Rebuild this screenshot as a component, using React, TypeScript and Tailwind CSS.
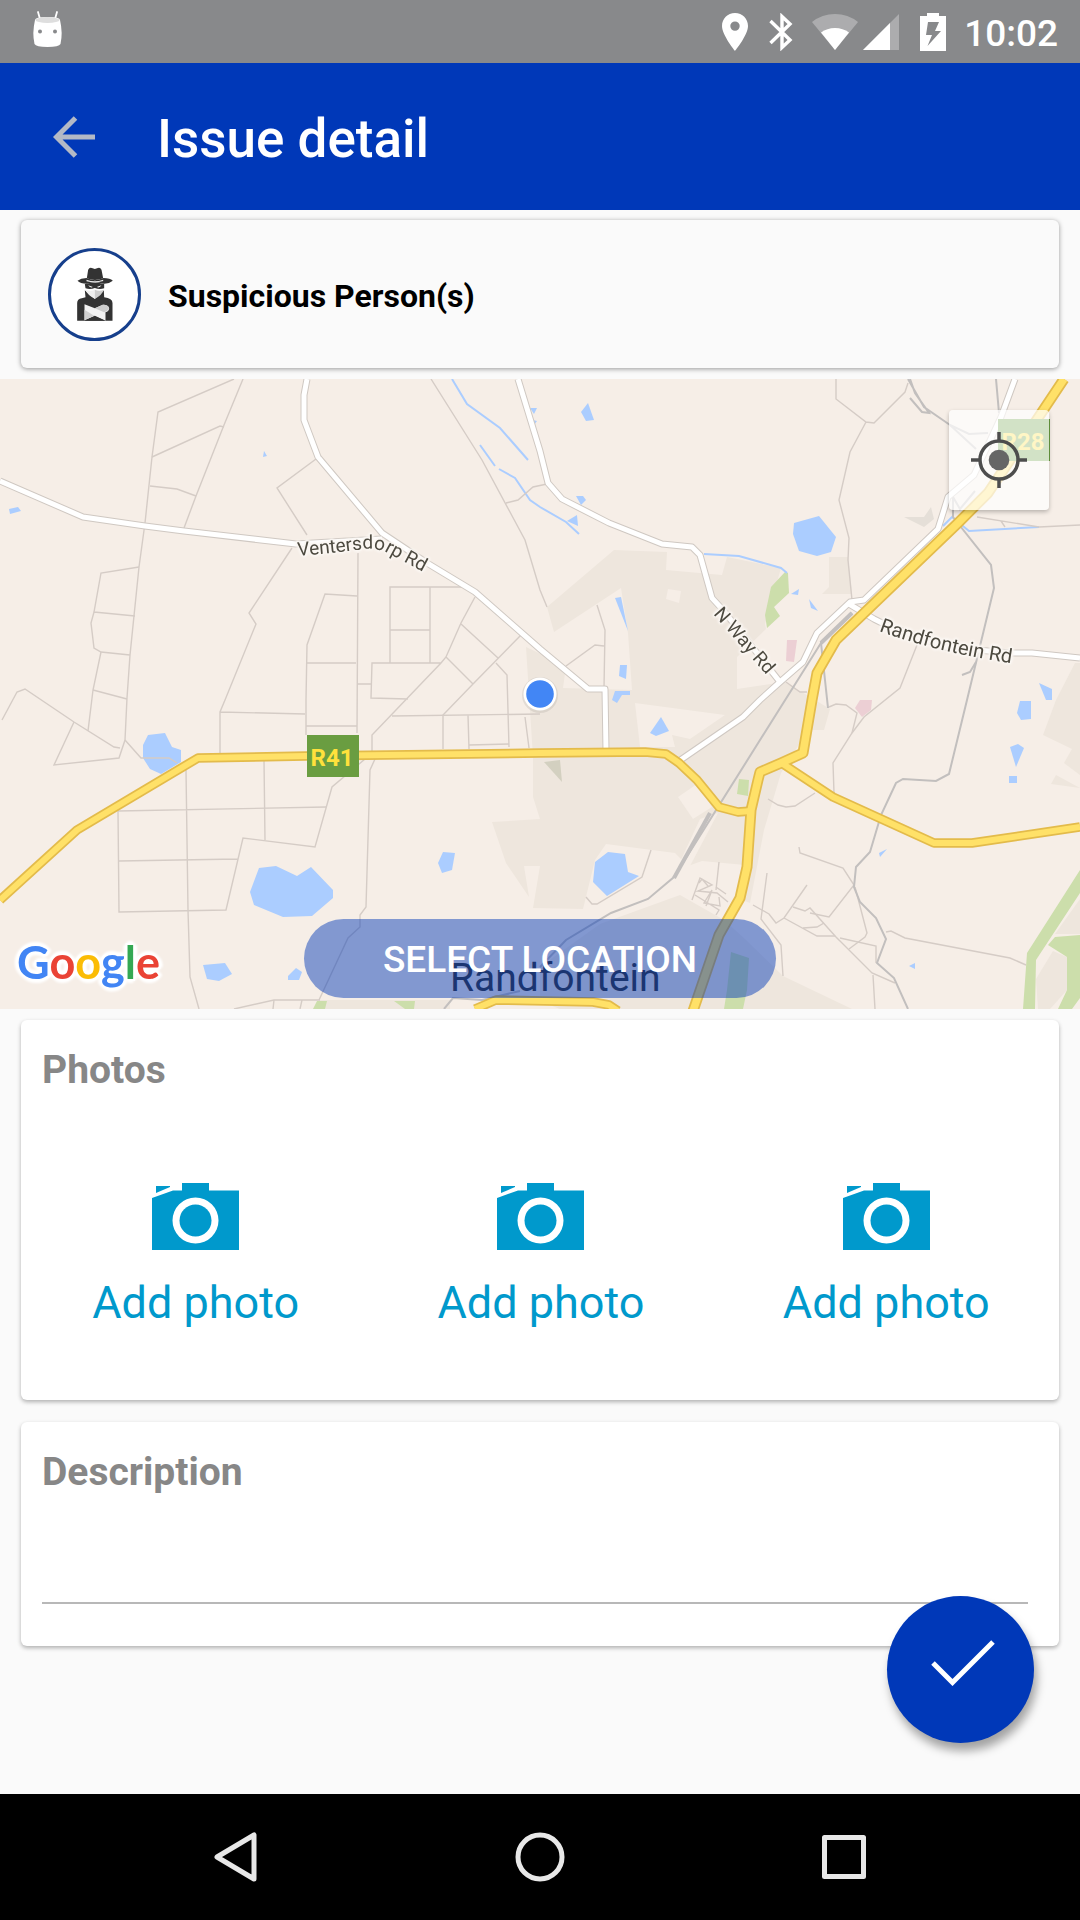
import React, { useState } from 'react';

const minorRoads = [
  'M234 0L158 33L152 78L145 144L139 188L130 276L127 319L125 361L119 379L54 386L74 343',
  'M243 0L224 46L196 117L184 149',
  'M152 78L220 47L224 48M150 107L177 110L196 117',
  'M139 188L101 194L94 233L91 244L94 269L101 273L130 276M94 233L135 237',
  'M101 273L93 311L88 352M93 311L127 320',
  'M2 341L17 313L25 310L74 343L114 368L120 369',
  'M316 80L277 109L307 156',
  'M292 169L249 234L256 245L225 321L220 333V374M220 333L305 335',
  'M358 174L357 354M357 217L325 215L307 266L306 321V356M307 284H356M306 347H357',
  'M463 208H390V284M430 208V284M390 251H430',
  'M475 218L461 244L446 278L441 284L372 284L371 319L408 320M441 284L372 356V373M357 305H372',
  'M461 245L498 279M446 278L473 305M521 256L473 305L443 336V370M496 284L507 296L509 368',
  'M392 337L540 335M468 336L469 370M469 366L509 365M525 338L529 369',
  'M431 0L482 81L525 161L540 211L547 228M506 124L518 121L533 108L547 105',
  'M186 391L188 531L190 598L199 630M118 432L326 428',
  'M118 432L119 533L226 531L243 459L315 468L332 408L365 380M264 381L265 461M119 482L238 480',
  'M375 380L370 391L366 528L360 536V548L348 559L319 621',
  'M234 630L274 621L320 621M274 621L273 630M302 621L300 630',
  'M125 361L141 379L169 379L177 384',
  'M836 0V20L866 43L874 44L905 13L908 4M866 43L850 73L839 121L849 159L848 181L852 221',
  'M977 138L1039 148L1080 146M1001 142L1005 148',
  'M917 266L900 309L864 338L852 354L833 384L834 414',
  'M566 287L595 266L604 267M597 226L605 251L604 309',
  'M786 303L800 313L807 313M829 328L836 325L846 326L857 334L852 354',
  'M768 420L778 426L786 428L795 427L815 414',
  'M799 468L800 474L843 489L854 506L829 538L810 534',
  'M807 506L784 539L776 544L769 535L753 526',
  'M793 528L805 532L810 529L836 558L872 594L895 604',
  'M784 539L817 557L835 557M803 549L817 548L824 544M840 559L876 567V584',
  'M855 508L867 554L865 558L849 570M767 494L761 540L781 566L783 597M873 596L875 630',
  'M886 553L891 552L905 559L1010 579L1026 586',
  'M651 471L642 498L597 525H592L586 518M719 483L716 511',
  'M692 521L700 499L712 506L698 512L717 514L728 523M695 516L719 531L716 536M716 508L726 515M706 527L712 511L704 524L720 527L719 518M699 504L702 500L708 507',
];

const railways = [
  'M908 0L924 28L950 46L969 55L988 54M910 19L922 33L929 34L915 14L910 0M950 46L976 70',
  'M996 0L999 34M975 112L960 130L953 118V138L991 186L994 209L967 321L949 395L936 402L903 400L896 404L881 436L870 473L856 488L854 508L860 523L876 539L886 560L877 584L894 599L908 630',
  'M962 296L970 293L976 283M852 234L821 264L828 329',
  'M821 264L674 498L648 520L611 534L566 561L540 588',
  'M444 630L453 619L482 621L520 612',
];

const whiteRoads = [
  'M0 102L83 138L145 147L184 152L296 165L382 160',
  'M307 0L304 16V41L318 78L382 154L427 184L475 213L540 270L588 310H605L606 372',
  'M518 0L540 72L548 104L562 120L609 144L662 165L692 168L700 176L712 219L723 231L780 303',
  'M1015 0L1001 38L974 96L948 118L938 150L864 221L850 223L817 254L803 283L780 303L760 321L743 338L679 382',
  'M849 225L874 240L884 245L945 268L1010 274H1032L1080 279',
];

const yellowRoads = [
  'M0 521L77 451L198 379L306 377L540 374L645 373L666 375L679 384L697 401L719 428L738 433L751 432',
  'M783 385L833 418L934 464H972L1080 448',
  'M475 630L496 621L593 623L609 626L618 632',
  'M1064 0L988 114L958 144L836 261L817 294L812 321L803 374L781 384L760 393L758 401L751 431L747 488L740 519L719 556L693 632',
];

const water = [
  '9,130 18,128 21,132 10,135',
  '264,72 267,77 263,78',
  '530,29 537,29 534,35',
  '533,41 537,42 534,46',
  '588,24 594,41 586,42 581,33',
  '576,117 583,117 586,121 581,126',
  '567,142 577,136 578,147',
  '794,144 819,137 836,158 831,173 817,177 799,172 793,155',
  '615,219 621,218 628,252',
  '620,286 627,286 626,300 619,297',
  '615,312 630,312 630,316 622,316 617,324 612,321',
  '791,215 799,210 798,216',
  '809,220 818,232 811,229',
  '1039,304 1052,310 1052,321 1046,321',
  '1020,322 1031,322 1031,340 1021,341 1017,334',
  '1010,368 1018,365 1024,369 1016,388',
  '1009,397 1017,397 1017,404 1009,404',
  '661,338 669,352 656,357 650,354',
  '595,483 608,473 625,475 628,493 639,497 607,517 593,503',
  '879,474 887,470 880,478',
  '909,587 915,584 915,590',
  '148,356 165,354 172,368 181,371 181,383 161,395 150,390 143,379 143,366',
  '259,489 276,487 297,497 311,488 333,511 333,519 312,537 283,538 254,526 250,513',
  '443,473 455,474 452,491 442,494 438,484',
  '203,586 225,584 232,595 219,602 207,600',
  '288,601 288,597 296,589 302,593 299,601',
];

const streams =
  'M452 0L467 25L500 49L528 81M480 66L495 87M499 90L515 99L530 121L540 128L566 143L579 155M704 175L739 177L781 189L787 194M943 147L952 138L969 152L1039 148';

const urban = [
  '547,228 614,171 667,173 666,191 722,196 727,178 781,189 765,245 766,250 737,278 737,310 785,303 830,330 824,351 808,351 781,394 764,451 750,524 739,520 745,486 702,482 688,487 675,474 606,465 595,481 583,530 533,529 540,487 524,487 529,518 506,484 492,443 540,440 533,418 533,378 526,268 566,287 563,309 632,311 628,254 621,209 554,253',
  '540,588 600,545 680,516 724,541 745,560 783,597 852,630 560,630 540,622',
  '320,621 450,621 450,630 320,630',
  '829,178 848,178 852,215 822,215 829,208',
  '1080,284 1075,284 1056,321 1043,356 1072,370 1064,384 1080,396',
  '1056,396 1051,405 1080,409',
  '1036,600 1053,572 1067,578 1067,611 1050,630 1038,630',
  '1080,520 1055,555 1080,555',
];

const parks = [
  '785,193 788,194 789,214 774,228 780,237 767,249 765,236 771,208',
  '739,400 749,401 748,417 737,415',
  '731,573 749,579 747,611 743,630 724,630 727,611',
  '1080,491 1027,574 1023,630 1035,630 1036,581 1080,514',
  '1048,566 1055,558 1080,556 1080,619 1072,630 1058,630 1067,611 1067,578',
  '317,622 327,622 325,630 313,630',
  '394,622 415,622 414,630 405,630',
];

const MapCanvas: React.FC = () => (
  <svg
    viewBox="0 0 1080 630"
    preserveAspectRatio="xMidYMid slice"
    className="block w-full h-[630px] bg-[#f6eee7] font-['Roboto',sans-serif]"
    role="img"
    aria-label="Map of Randfontein"
  >
    <g fill="#eee6dd">
      {urban.map((p) => (
        <polygon key={p} points={p} />
      ))}
    </g>
    {/* Undeveloped pockets inside the town */}
    <g fill="#f6eee7">
      <polygon points="635,324 725,336 690,360 672,356 675,368 640,368" />
      <polygon points="668,210 681,212 679,224 666,220" />
      <polygon points="678,418 697,405 712,428 693,440" />
      <polygon points="700,440 718,434 690,487 672,500" />
    </g>
    <polygon points="904,138 924,138 931,128 934,140 924,148" fill="#e5dfd8" />
    <polygon points="544,383 560,381 562,403" fill="#d3d0c0" />
    <g fill="#eccfd4">
      <polygon points="787,261 797,261 794,283 786,282" />
      <polygon points="860,321 872,321 871,331 862,338 855,329" />
    </g>
    <g fill="#ccdeab">
      {parks.map((p) => (
        <polygon key={p} points={p} />
      ))}
    </g>
    <g fill="#abcdff">
      {water.map((p) => (
        <polygon key={p} points={p} />
      ))}
    </g>
    <path d={streams} fill="none" stroke="#abcdff" strokeWidth="2" />
    <g fill="none" stroke="#d5ccc6" strokeWidth="1.4">
      {minorRoads.map((d) => (
        <path key={d} d={d} />
      ))}
    </g>
    <g fill="none" stroke="#c2bfbe" strokeWidth="2">
      {railways.map((d) => (
        <path key={d} d={d} />
      ))}
      <path d="M710 434L674 499" strokeWidth="4" />
      <path d="M852 234L821 264" strokeWidth="4" />
    </g>
    <g fill="none" strokeLinejoin="round">
      {whiteRoads.map((d) => (
        <path key={d} d={d} stroke="#cfc8c2" strokeWidth="7" />
      ))}
      {whiteRoads.map((d) => (
        <path key={d} d={d} stroke="#fff" strokeWidth="5" />
      ))}
      {yellowRoads.map((d, i) => (
        <path key={d} d={d} stroke="#e3bb4b" strokeWidth={i === 3 ? 11 : 9.5} />
      ))}
      {yellowRoads.map((d, i) => (
        <path key={d} d={d} stroke="#ffe168" strokeWidth={i === 3 ? 7.5 : 6} />
      ))}
    </g>

    {/* Road names follow the line of the road */}
    <path id="ventersdorp" d="M298 177L340 173L364 170Q376 169 386 173L440 202" fill="none" />
    <path id="nway" d="M713 235L790 323" fill="none" />
    <path id="randfontein-rd" d="M879 252Q940 275 1030 287" fill="none" />
    <g
      fontSize="19"
      fill="#4d4a40"
      className="[filter:drop-shadow(1px_1px_0_#fbf7f3)_drop-shadow(-1px_-1px_0_#fbf7f3)_drop-shadow(1px_-1px_1px_#fbf7f3)_drop-shadow(-1px_1px_1px_#fbf7f3)]"
    >
      <text>
        <textPath href="#ventersdorp">Ventersdorp Rd</textPath>
      </text>
      <text>
        <textPath href="#nway">N Way Rd</textPath>
      </text>
      <text fontSize="20">
        <textPath href="#randfontein-rd">Randfontein Rd</textPath>
      </text>
    </g>
    <g fontSize="24" fontWeight="700" textAnchor="middle">
      <rect x="307" y="356" width="52" height="42" fill="#6a9d41" />
      <text x="332" y="387" fill="#ffe13c">R41</text>
      <rect x="998" y="40" width="52" height="42" fill="#6a9d41" />
      <text x="1023" y="71" fill="#ffe13c">R28</text>
    </g>
    <text x="450" y="612" fontSize="39" fill="#333">Randfontein</text>

    <text
      x="17"
      y="600"
      fontFamily="Lato"
      fontSize="45"
      fontWeight="700"
      className="[filter:drop-shadow(2px_2px_0_#fff)_drop-shadow(-2px_-2px_0_#fff)_drop-shadow(2px_-2px_1px_#fff)_drop-shadow(-2px_2px_1px_#fff)]"
    >
      <tspan fill="#4285f4">G</tspan>
      <tspan fill="#ea4335">o</tspan>
      <tspan fill="#fbbc05">o</tspan>
      <tspan fill="#4285f4">g</tspan>
      <tspan fill="#34a853">l</tspan>
      <tspan fill="#ea4335">e</tspan>
    </text>

    <circle cx="540" cy="316" r="18" fill="#000" opacity="0.08" />
    <circle cx="540" cy="315" r="16.5" fill="#fff" />
    <circle cx="540" cy="315" r="13.8" fill="#4286f5" />
  </svg>
);

const StatusBar: React.FC = () => (
  <div className="h-[63px] pl-8 pr-[22px] bg-[#88898b] text-white flex items-center justify-between">
    <svg width="31" height="37" viewBox="0 0 31 37" className="mb-1">
      <path d="M6 1L8 8M25 1L23 8" stroke="#fff" strokeWidth="1.8" strokeLinecap="round" />
      <path d="M3 9Q3 6 15.500 6Q28 6 28 9Q31 22 28.500 33Q27 36 15.500 36Q4 36 2.500 33Q0 22 3 9Z" fill="#fff" />
      <ellipse cx="15.500" cy="9" rx="12" ry="3" fill="#dedede" />
      <circle cx="8" cy="20.500" r="2" fill="#88898b" />
      <circle cx="23" cy="20.500" r="2" fill="#88898b" />
    </svg>
    <div className="flex items-center">
      <svg width="26" height="38" viewBox="0 0 26 38" className="mr-[21px]">
        <path
          d="M13 0C5.500 0 0 5.800 0 13C0 22 13 38 13 38S26 22 26 13C26 5.800 20.500 0 13 0ZM13 17.800A4.700 4.700 0 1 1 13 8.400A4.700 4.700 0 0 1 13 17.800Z"
          fill="#fff"
          fillRule="evenodd"
        />
      </svg>
      <svg width="24" height="38" viewBox="0 0 24 38" className="mr-[19px]">
        <path d="M1.500 8L21 27L13 34.500V3.500L21 11L1.500 30" fill="none" stroke="#fff" strokeWidth="3.400" />
      </svg>
      <svg width="46" height="38" viewBox="0 0 46 38" className="mr-[5px]">
        <path d="M23 37L0 9Q10 1 23 1T46 9Z" fill="#fff" opacity="0.3" />
        <path d="M23 37L9 19.500Q15 15 23 15T37 19.500Z" fill="#fff" />
      </svg>
      <svg width="36" height="38" viewBox="0 0 36 38" className="mr-[21px]">
        <path d="M0 37L36 1V37Z" fill="#fff" opacity="0.3" />
        <path d="M0 37L27 10V37Z" fill="#fff" />
      </svg>
      <svg width="26" height="38" viewBox="0 0 26 38" className="mr-[18px]">
        <path d="M0 3H7V0H19V3H26V38H0ZM8 9L6 22H12L7.500 33L21 18H15L19 9Z" fill="#fff" fillRule="evenodd" />
      </svg>
      <span className="pt-1 text-[37px] leading-[48px] font-medium">10:02</span>
    </div>
  </div>
);

const SuspectIcon: React.FC = () => (
  <svg width="36" height="54" viewBox="141 104 107 162">
    <path d="M141 265V212Q141 200 155 198L166 195L164 174L194 200L221 174L222 195Q247 198 247 212V265Z" fill="#333" />
    <path d="M170 138L174 112Q178 104 185 107L194 110L203 107Q210 104 214 112L219 138Q194 148 170 138Z" fill="#333" />
    <path d="M142 145Q152 138 169 137Q194 150 220 137Q240 138 248 145Q236 155 220 154Q194 145 170 154Q150 154 142 145Z" fill="#333" />
    <path d="M169 142Q194 151 219 142V146Q194 153 169 147Z" fill="#eee" />
    <path d="M164 155Q194 148 222 155V168Q208 173 194 167Q180 173 166 168Z" fill="#333" />
    <path d="M174 159L188 164Q180 168 174 159ZM214 159L200 164Q208 168 214 159Z" fill="#fff" />
    <path d="M165 172Q180 178 194 172V199Q172 188 165 172Z" fill="#eee" />
    <path d="M221 172Q208 178 194 172V199Q216 188 221 172Z" fill="#ccc" />
    <path d="M163 216L194 228L218 217Q234 216 237 228Q236 238 226 240V265L194 250L163 264Z" fill="#f2f2f2" />
    <path d="M163 232V264L192 250Z" fill="#d0d0d0" />
    <path d="M194 228L218 217Q234 216 237 228Q232 238 222 240Z" fill="#ccc" />
    <path d="M163 265L194 252L226 265Z" fill="#333" />
  </svg>
);

const CameraIcon: React.FC = () => (
  <svg width="87" height="67" viewBox="0 0 87 67" fill="#0099cc">
    <path d="M4 3H18V4L4 10Z" />
    <path
      d="M0 15L21 7.500H30V0H57V7.500H87V67H0ZM43.500 14.500A23 23 0 1 0 43.500 60.500A23 23 0 1 0 43.500 14.500Z"
      fillRule="evenodd"
    />
    <circle cx="43.500" cy="37.500" r="16" />
  </svg>
);

const Card: React.FC<{ className: string; children: React.ReactNode }> = ({ className, children }) => (
  <section className={`mx-[21px] rounded-md ${className}`}>{children}</section>
);

export default function App() {
  const [description, setDescription] = useState('');

  return (
    <div className="min-h-screen flex flex-col bg-[#fafafa] font-['Roboto',sans-serif]">
      <StatusBar />

      <header className="h-[147px] pl-[53px] bg-[#0038b8] flex items-center gap-[62px]">
        <button aria-label="Back">
          <svg width="42" height="42" viewBox="0 0 42 42" fill="none" stroke="#b3b9c6" strokeWidth="5">
            <path d="M42 21H4M22.500 2L3.500 21L22.500 40" />
          </svg>
        </button>
        <h1 className="pt-1 text-[53px] leading-[64px] font-medium text-white">Issue detail</h1>
      </header>

      <main className="relative flex-1 pt-[10px]">
        <Card className="bg-[#fafafa] h-[148px] pl-[27px] flex items-center gap-[27px] shadow-[0_1px_5px_rgba(0,0,0,0.4)]">
          <div className="w-[93px] h-[93px] rounded-full border-3 border-[#163f8c] bg-white flex items-center justify-center">
            <SuspectIcon />
          </div>
          <h2 className="pt-1 text-[32px] leading-[40px] font-bold text-black">Suspicious Person(s)</h2>
        </Card>

        {/* Map with its overlay controls */}
        <div className="relative mt-[11px]">
          <MapCanvas />
          <button
            aria-label="My location"
            className="absolute top-[31px] right-[31px] w-[100px] h-[100px] rounded-sm bg-white/70 shadow-[0_2px_4px_rgba(0,0,0,0.25)] flex items-center justify-center"
          >
            <svg width="56" height="56" viewBox="0 0 56 56" stroke="#4d4d4d" strokeWidth="3.500" fill="none">
              <circle cx="28" cy="28" r="19" />
              <path d="M28 0V9M28 47V56M0 28H9M47 28H56" />
              <circle cx="28" cy="28" r="10.300" fill="#666" stroke="none" />
            </svg>
          </button>
          <div className="absolute bottom-[11px] inset-x-0 flex justify-center">
            <button className="w-[472px] h-[79px] pt-[3px] rounded-full bg-[#0038b8]/47 text-[37px] leading-[48px] font-medium text-white">
              SELECT LOCATION
            </button>
          </div>
        </div>

        <div className="pt-[11px] flex flex-col gap-[22px]">
          <Card className="bg-white pt-[26px] pb-[69px] shadow-[0_2px_4px_rgba(0,0,0,0.3)]">
            <h2 className="pl-[21px] text-[39px] leading-[48px] font-bold text-[#878787]">Photos</h2>
            <div className="mt-[89px] pl-[2px] grid grid-cols-3">
              {[1, 2, 3].map((slot) => (
                <button key={slot} className="flex flex-col items-center gap-[25px]">
                  <CameraIcon />
                  <span className="text-[45px] leading-[56px] text-[#0099cc]">Add photo</span>
                </button>
              ))}
            </div>
          </Card>

          <Card className="bg-white pt-[26px] pb-[42px] pl-[21px] pr-[31px] shadow-[0_2px_4px_rgba(0,0,0,0.3)]">
            <label htmlFor="description" className="block text-[39px] leading-[48px] font-bold text-[#878787]">
              Description
            </label>
            <input
              id="description"
              value={description}
              onChange={(e) => setDescription(e.target.value)}
              className="block w-full h-[108px] border-b-2 border-[#b8b8b8] bg-transparent text-[39px] outline-none"
            />
          </Card>
        </div>

        <button
          aria-label="Submit issue"
          className="absolute right-[46px] bottom-[51px] w-[147px] h-[147px] rounded-full bg-[#0038b8] shadow-[3px_8px_10px_rgba(0,0,0,0.35)] flex items-center justify-center"
        >
          <svg width="64" height="46" viewBox="0 0 64 46" className="mb-[14px] ml-[4px]" fill="none" stroke="#fff" strokeWidth="5">
            <path d="M2 23L21.500 42.500L62 2" />
          </svg>
        </button>
      </main>

      <nav className="h-[126px] px-[84px] bg-black grid grid-cols-3 items-center justify-items-center">
        <button aria-label="Back">
          <svg width="44" height="50" viewBox="0 0 44 50" fill="none" stroke="#e8e8e8" strokeWidth="5" strokeLinejoin="round">
            <path d="M40 3V47L3 25Z" />
          </svg>
        </button>
        <button aria-label="Home">
          <svg width="50" height="50" viewBox="0 0 50 50" fill="none" stroke="#e8e8e8" strokeWidth="5">
            <circle cx="25" cy="25" r="22" />
          </svg>
        </button>
        <button aria-label="Recent apps">
          <svg width="44" height="44" viewBox="0 0 44 44" fill="none" stroke="#e8e8e8" strokeWidth="5" strokeLinejoin="round">
            <rect x="2.500" y="2.500" width="39" height="39" />
          </svg>
        </button>
      </nav>
    </div>
  );
}
